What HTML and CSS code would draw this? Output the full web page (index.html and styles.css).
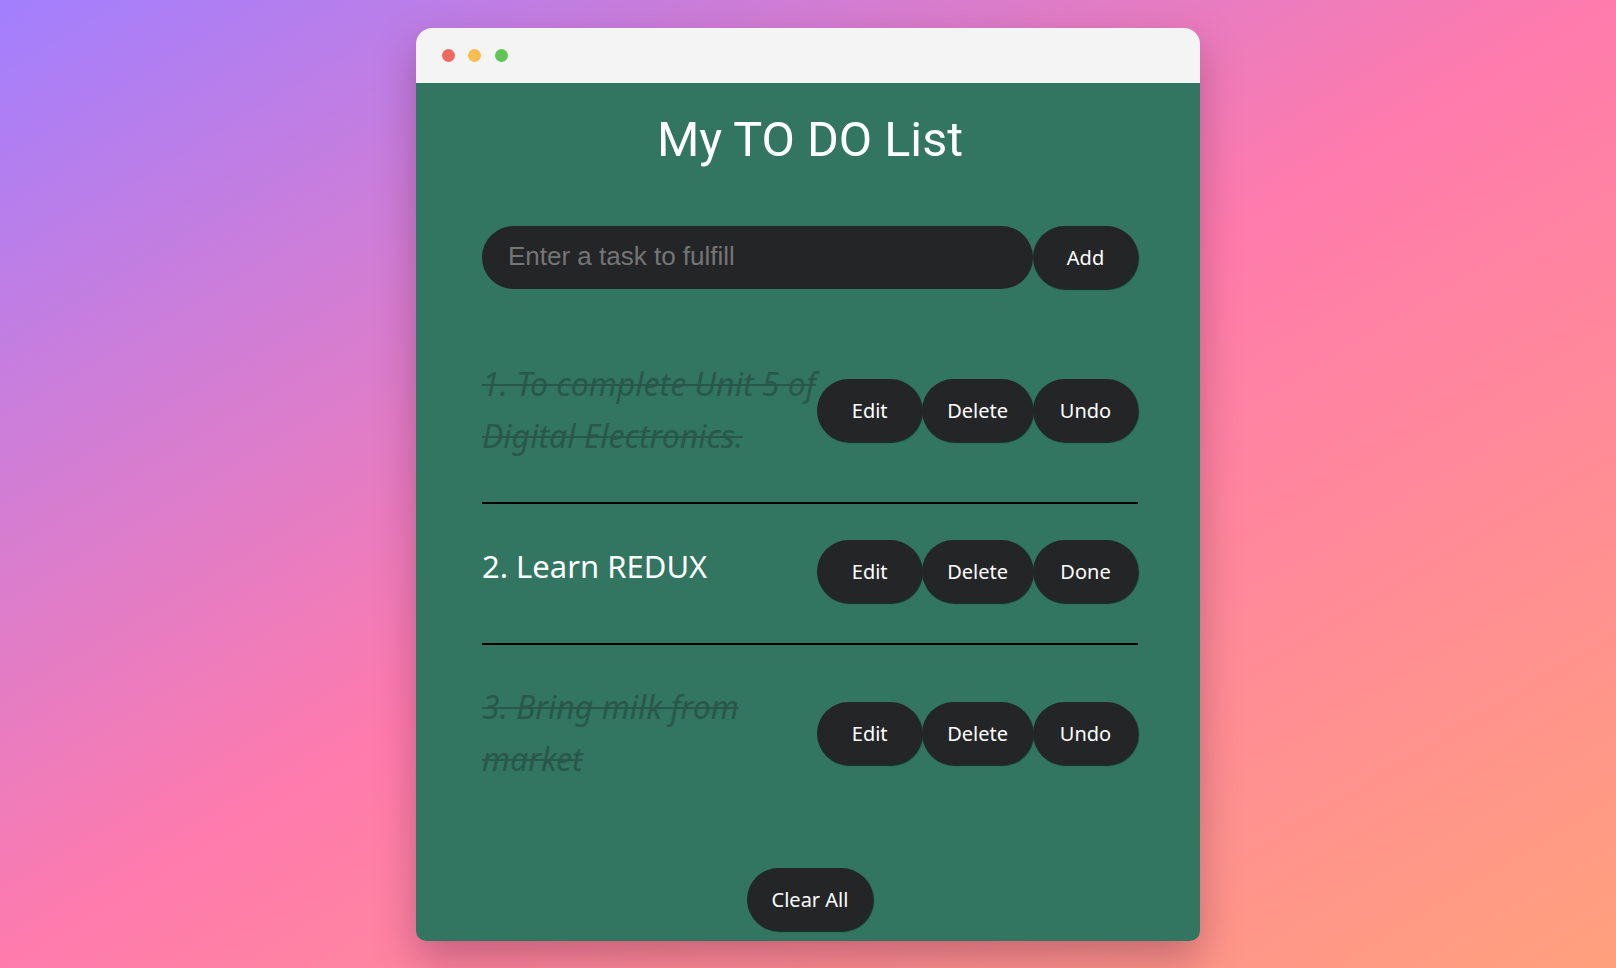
FILE: index.html
```html
<!DOCTYPE html>
<html lang="en">
<head>
<meta charset="utf-8">
<title>My TO DO List</title>
<link rel="stylesheet" href="styles.css">
</head>
<body>
<div class="stage">
  <div class="window">
    <div class="titlebar">
      <span class="dot red"></span>
      <span class="dot yellow"></span>
      <span class="dot green"></span>
    </div>
    <main class="content">
      <h1 class="title">My TO DO List</h1>
      <form class="add-form">
        <input class="task-input" type="text" placeholder="Enter a task to fulfill">
        <button class="btn" type="button">Add</button>
      </form>
      <ul class="list">
        <li class="item">
          <span class="task done">1. To complete Unit 5 of Digital Electronics.</span>
          <div class="actions">
            <button class="btn" type="button">Edit</button>
            <button class="btn" type="button">Delete</button>
            <button class="btn" type="button">Undo</button>
          </div>
        </li>
        <li class="item">
          <span class="task">2. Learn REDUX</span>
          <div class="actions">
            <button class="btn" type="button">Edit</button>
            <button class="btn" type="button">Delete</button>
            <button class="btn" type="button">Done</button>
          </div>
        </li>
        <li class="item">
          <span class="task done">3. Bring milk from market</span>
          <div class="actions">
            <button class="btn" type="button">Edit</button>
            <button class="btn" type="button">Delete</button>
            <button class="btn" type="button">Undo</button>
          </div>
        </li>
      </ul>
      <div class="footer">
        <button class="btn" type="button">Clear All</button>
      </div>
    </main>
  </div>
</div>
</body>
</html>
```

FILE: styles.css
```css
* { box-sizing: border-box; }

html, body {
  margin: 0;
  height: 100%;
}

body {
  background: linear-gradient(to bottom right, #a27ffe 0%, #ff7bac 50%, #ffa07c 100%);
  font-family: "Noto Sans", "DejaVu Sans", sans-serif;
  overflow: hidden;
}

.stage {
  display: flex;
  justify-content: center;
  padding-top: 28px;
}

.window {
  width: 784px;
  height: 913px;
  display: flex;
  flex-direction: column;
  border-radius: 16px 16px 10px 10px;
  overflow: hidden;
  box-shadow: 0 18px 40px rgba(90, 30, 60, 0.35);
}

.titlebar {
  height: 55px;
  flex: none;
  background: #f4f4f4;
  display: flex;
  align-items: center;
  gap: 13.5px;
  padding-left: 25.5px;
  padding-bottom: 1px;
}

.dot {
  width: 13px;
  height: 13px;
  border-radius: 50%;
}
.dot.red { background: #ee6a5f; }
.dot.yellow { background: #f5bf4f; }
.dot.green { background: #61c554; }

.content {
  flex: 1;
  background: #327560;
  padding: 26px 62px 0 66px;
  display: flex;
  flex-direction: column;
}

.title {
  margin: 0;
  text-align: center;
  color: #ffffff;
  font-family: Roboto, "Noto Sans", sans-serif;
  font-size: 48.5px;
  font-weight: 400;
  line-height: 62px;
}

.add-form {
  display: flex;
  margin-top: 55px;
}

.task-input {
  flex: 1;
  min-width: 0;
  height: 63px;
  border: none;
  outline: none;
  border-radius: 32px;
  background: #242527;
  padding: 0 0 2px 26px;
  font-family: "Liberation Sans", Arial, sans-serif;
  font-size: 26px;
  color: #ffffff;
}
.task-input::placeholder { color: #757575; }

.btn {
  height: 63px;
  min-width: 105px;
  padding: 0 25px;
  border: none;
  border-radius: 32px;
  background: #242527;
  color: #ffffff;
  font-family: "Noto Sans", "DejaVu Sans", sans-serif;
  font-size: 20px;
  box-shadow: 1px 1px 1px rgba(0, 0, 0, 0.6);
  cursor: pointer;
}

.list {
  list-style: none;
  margin: 33px 0 0;
  padding: 0;
}

.item {
  display: flex;
  align-items: center;
  justify-content: space-between;
  padding: 36px 0 40px;
  border-bottom: 2px solid #000;
}
.item:last-child { border-bottom: none; }

.task {
  flex: 1;
  min-width: 0;
  align-self: flex-start;
  color: #ffffff;
  font-size: 31px;
  line-height: 52px;
}
.task.done {
  color: #29584a;
  font-size: 32px;
  font-style: italic;
  text-decoration: line-through;
  text-decoration-thickness: 2px;
}

.actions {
  display: flex;
  flex: none;
}

.footer {
  margin-top: auto;
  padding-bottom: 10px;
  display: flex;
  justify-content: center;
}
```
